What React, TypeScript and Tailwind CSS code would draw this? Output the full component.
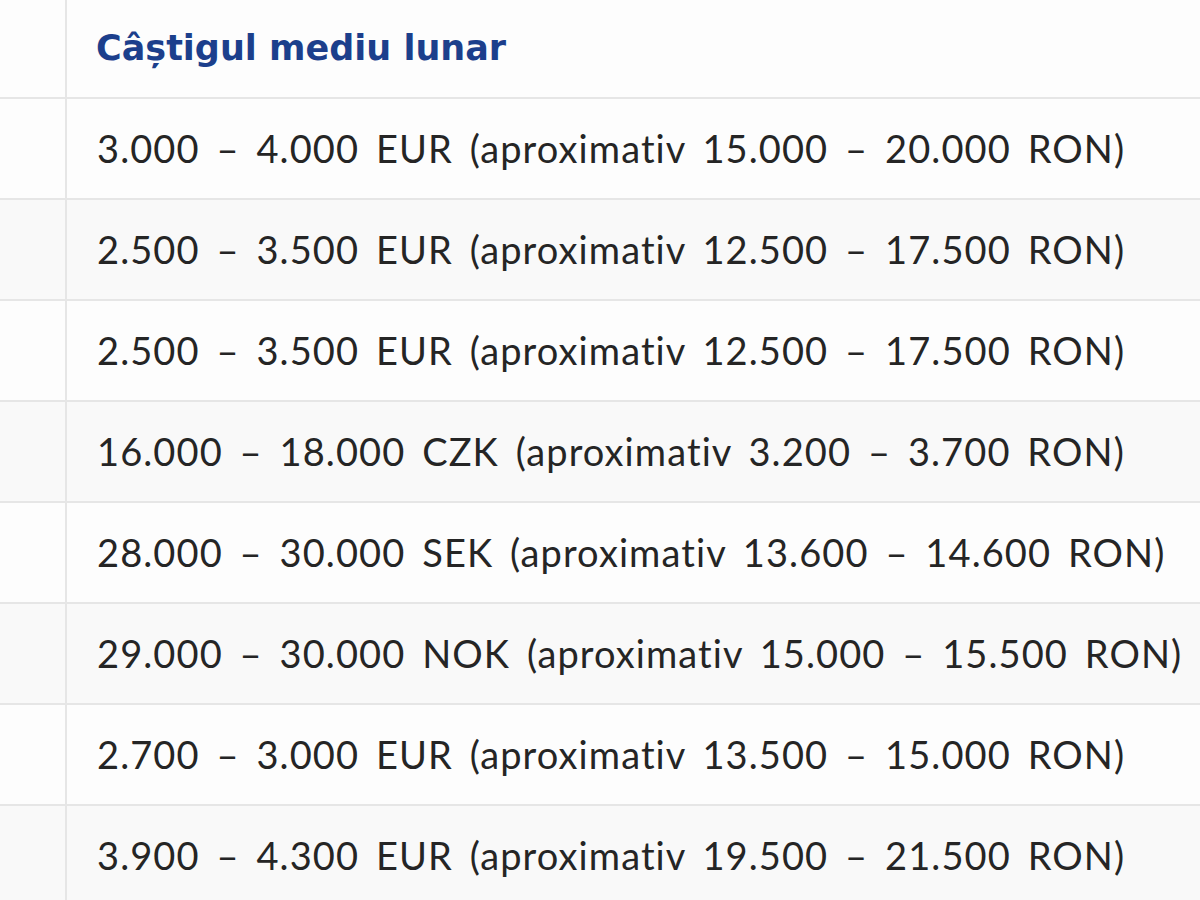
import React from "react";

const rows = [
  "3.000 – 4.000 EUR (aproximativ 15.000 – 20.000 RON)",
  "2.500 – 3.500 EUR (aproximativ 12.500 – 17.500 RON)",
  "2.500 – 3.500 EUR (aproximativ 12.500 – 17.500 RON)",
  "16.000 – 18.000 CZK (aproximativ 3.200 – 3.700 RON)",
  "28.000 – 30.000 SEK (aproximativ 13.600 – 14.600 RON)",
  "29.000 – 30.000 NOK (aproximativ 15.000 – 15.500 RON)",
  "2.700 – 3.000 EUR (aproximativ 13.500 – 15.000 RON)",
  "3.900 – 4.300 EUR (aproximativ 19.500 – 21.500 RON)",
];

export default function App() {
  return (
    <div className="w-[1200px] h-[900px] overflow-hidden bg-white" style={{ fontFamily: "Lato, 'Noto Sans', sans-serif" }}>
      <div className="flex h-[99px] border-b-2 border-[#e6e6e6] bg-[#fdfdfd]">
        <div className="w-[67px] shrink-0 border-r-2 border-[#e6e6e6]" />
        <div className="flex items-center pl-[29px] text-[35px] font-bold text-[#1c3f8c] whitespace-nowrap font-['DejaVu_Sans',sans-serif]">
          Câștigul mediu lunar
        </div>
      </div>
      {rows.map((r, i) => (
        <div
          key={i}
          className={`flex h-[101px] border-b-2 border-[#e6e6e6] ${i % 2 === 1 ? "bg-[#f9f9f9]" : "bg-[#fdfdfd]"}`}
        >
          <div className="w-[67px] shrink-0 border-r-2 border-[#e6e6e6]" />
          <div className="flex items-center pl-[30px] text-[38px] text-[#252525] whitespace-nowrap tracking-[1.1px] [word-spacing:6px]">
            {r}
          </div>
        </div>
      ))}
    </div>
  );
}
